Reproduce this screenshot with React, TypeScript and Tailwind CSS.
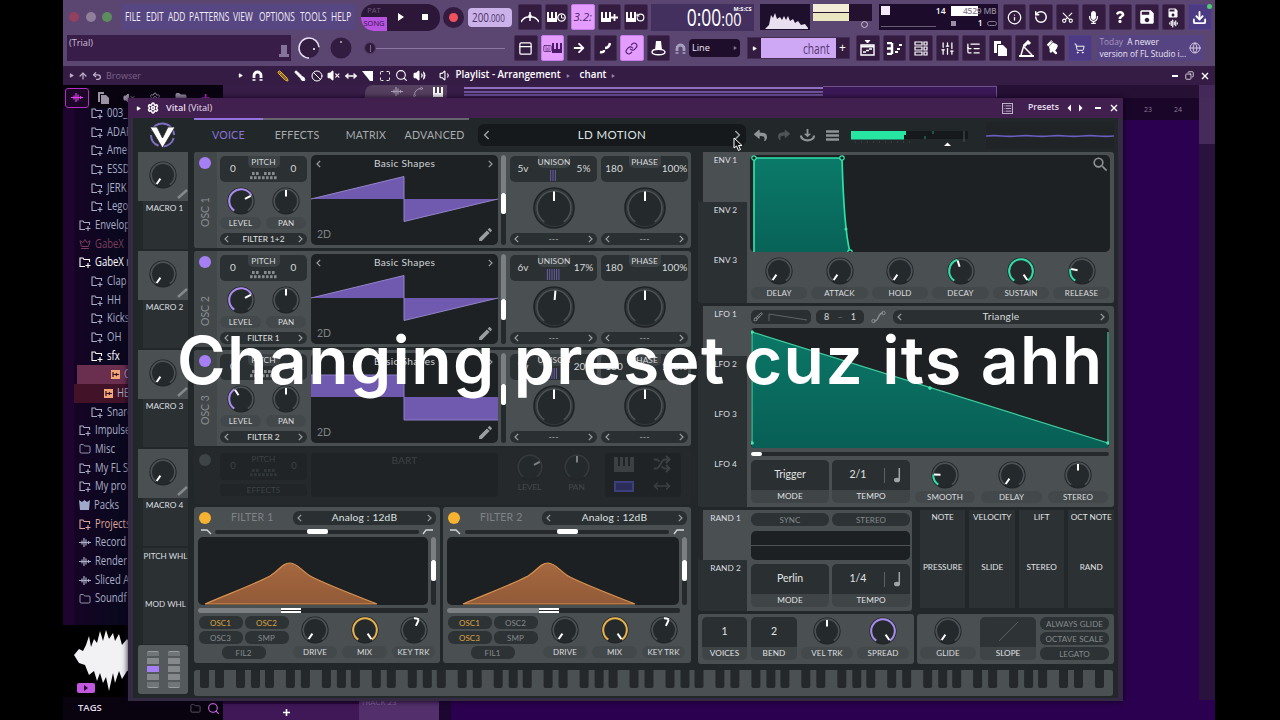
import React from "react";
import {
  Play, Info, RotateCcw, Scissors, Download, ShoppingCart, Link as LinkIcon, Globe,
  Ban, VolumeX, MoveHorizontal, Maximize, Search, Volume2, Volume1, Folder, Crown,
  AudioLines, Settings, List, SlidersVertical, ListTree, Spline, PanelTop, Copy, Keyboard,
  Undo2, ArrowUp, Pencil, Brush, Shuffle,
} from "lucide-react";
import { MdEdit, MdSearch, MdSave } from "react-icons/md";
import { FaReply, FaShare, FaArrowRight, FaQuestion, FaMicrophone, FaHandPointDown } from "react-icons/fa";

/* ---------- shared pieces ---------- */

const rad = (a: number) => ((a - 90) * Math.PI) / 180;
const arc = (c: number, r: number, a: number, b: number) => {
  const x1 = c + r * Math.cos(rad(a)), y1 = c + r * Math.sin(rad(a));
  const x2 = c + r * Math.cos(rad(b)), y2 = c + r * Math.sin(rad(b));
  return `M${x1} ${y1}A${r} ${r} 0 ${b - a > 180 ? 1 : 0} 1 ${x2} ${y2}`;
};

type KnobProps = { angle?: number; color?: string; from?: number; big?: boolean };
function Knob({ angle = -145, color, from = -145, big }: KnobProps) {
  const s = big ? 42 : 28;
  const c = s / 2;
  const r = big ? 17 : 11.8;
  return (
    <svg width={s} height={s} viewBox={`0 0 ${s} ${s}`} className="shrink-0">
      <circle cx={c} cy={c} r={c - 1} fill="#24292b" stroke="#1f2325" strokeWidth={big ? 1.6 : 1.2} />
      {big && <circle cx={c} cy={c} r={18.6} fill="none" stroke="#33383a" strokeWidth="1.2" />}
      <path d={arc(c, r, -145, 145)} fill="none" stroke="#4b5154" strokeWidth="1.7" />
      {color && <path d={arc(c, r, from, angle)} fill="none" stroke={color} strokeWidth="2" />}
      <line
        x1={c} y1={c - (big ? 16.5 : 11)} x2={c} y2={c - (big ? 7 : 4.5)}
        stroke="#fff" strokeWidth="2" transform={`rotate(${angle} ${c} ${c})`}
      />
    </svg>
  );
}

function Label({ children, className = "" }: { children: React.ReactNode; className?: string }) {
  return (
    <div className={`flex h-3 items-center justify-center rounded-md bg-[#43484b] text-[8px] tracking-[0.1px] whitespace-nowrap text-[#dadddf] ${className}`}>
      {children}
    </div>
  );
}

function KnobCell({ label, className = "", ...k }: { label: string; className?: string } & KnobProps) {
  return (
    <div className={`flex flex-col items-center ${className}`}>
      <Knob {...k} />
      <Label className="mt-[2px] w-full">{label}</Label>
    </div>
  );
}

function Chev({ right, className = "" }: { right?: boolean; className?: string }) {
  return (
    <svg width="5" height="8" viewBox="0 0 5 8" className={className}>
      <path d={right ? "M0.8 0.8L4 4L0.8 7.2" : "M4.2 0.8L1 4L4.2 7.2"} fill="none" stroke="#9a9fa2" strokeWidth="1.2" />
    </svg>
  );
}

function Select({ children, className = "" }: { children: React.ReactNode; className?: string }) {
  return (
    <div className={`flex items-center justify-between rounded-md bg-[#2a2f31] px-1 whitespace-nowrap ${className}`}>
      <Chev />
      <span>{children}</span>
      <Chev right />
    </div>
  );
}

/* ---------- oscillators ---------- */

function ValueBox({ title, left, right, children }: { title: string; left: string; right: string; children?: React.ReactNode }) {
  return (
    <div className="grid h-[26px] w-[87px] grid-cols-[26px_35px_26px] rounded-[5px] bg-[#2b3032] text-center text-[10px] text-[#d6dadb]">
      <span className="leading-[25px]">{left}</span>
      <div className="flex flex-col items-center">
        <span className="h-[12px] w-[32px] rounded-b-[5px] bg-[#3c4144] text-[8.300px] leading-[12px] tracking-[0.1px]">{title}</span>
        {children}
      </div>
      <span className="-ml-[1px] leading-[25px]">{right}</span>
    </div>
  );
}

function MiniKeys({ color = "#868b8e" }: { color?: string }) {
  return (
    <svg width="27" height="8" className="mt-[4px]">
      {[2, 6, 14, 18, 22].map((x) => <rect key={x} x={x} y="0" width="2.6" height="3" fill={color} />)}
      {[0, 4, 8, 12, 16, 20, 24].map((x) => <rect key={x} x={x} y="4.2" width="2.6" height="3" fill={color} />)}
    </svg>
  );
}

type OscProps = { n: number; level: number; filter: string; square?: boolean; thumb: number; voices: string; detune: string; unison: number; bars: number };
function Osc({ n, level, filter, square, thumb, voices, detune, unison, bars }: OscProps) {
  return (
    <section className="flex h-[96px] w-[497px] overflow-hidden rounded-[3px] bg-[#4a4f52]">
      <div className="flex w-[23px] flex-col items-center bg-[#42474a] pt-[5px]">
        <span className="mr-[1px] size-3 rounded-full bg-[#a77ff5]" />
        <span className="mt-[16px] flex h-[42px] rotate-180 items-center text-[10.500px] text-[#888d90] [writing-mode:vertical-rl]">OSC {n}</span>
      </div>
      <div className="ml-[3px] w-[87px] pt-1">
        <ValueBox title="PITCH" left="0" right="0"><MiniKeys /></ValueBox>
        <div className="mt-[5px] flex gap-[5px]">
          <KnobCell label="LEVEL" angle={level} color="#a98af0" className="w-[41px]" />
          <KnobCell label="PAN" angle={0} className="w-[40px]" />
        </div>
        <Select className="mt-1 h-3 text-[8.300px] text-[#e0e3e4]">{filter}</Select>
      </div>
      <div className="mt-[3px] ml-1 flex h-[90px] w-[187px] flex-col justify-between rounded-[5px] bg-[#1d2124]">
        <div className="flex h-[17px] items-center justify-between px-[5px] text-[10.200px] tracking-[0.3px] text-[#cfd3d5]">
          <Chev /><span>Basic Shapes</span><Chev right />
        </div>
        <svg width="187" height="48" className="overflow-visible">
          {square ? (
            <g fill="#6f5ab0">
              <path d="M0 2H93V24H0Z" /><path d="M93 24H187V47H93Z" />
              <path d="M0 2H93V47H187" fill="none" stroke="#8f7cc8" />
            </g>
          ) : (
            <g>
              <path d="M0 24L93 1.500V24ZM93 24H187L93 46.500Z" fill="#6f5ab0" />
              <path d="M0 24L93 1.500V46.500L187 24" fill="none" stroke="#9483c8" />
            </g>
          )}
        </svg>
        <div className="flex h-[19px] items-center justify-between pr-1 pb-[2px] pl-[6px] text-[10.5px] text-[#7d8285]">
          <span>2D</span><MdEdit size={17} color="#9a9ea0" />
        </div>
      </div>
      <div className="mt-[3px] ml-[3px] flex h-[90px] w-[5px] flex-col overflow-hidden rounded bg-[#25292b]">
        <span className="bg-[#7b7f82]" style={{ height: thumb }} />
        <span className="h-[21px] rounded-[2px] bg-white" />
      </div>
      <div className="ml-1 flex gap-1 pt-1">
        <div className="flex flex-col items-center">
          <ValueBox title="UNISON" left={voices} right={detune}>
            <svg width="15" height="11" className="mt-[2px]">
              {Array.from({ length: bars }, (_, i) => (
                <rect key={i} x={7.5 - bars * 1.1 + i * 2.3} y="0" width="1" height="11" fill="#6a5fa8" />
              ))}
            </svg>
          </ValueBox>
          <span className="mt-[5px] flex"><Knob big angle={unison} /></span>
          <Select className="mt-[4px] h-3 w-full text-[9px] text-[#a0a4a6]">---</Select>
        </div>
        <div className="flex flex-col items-center">
          <ValueBox title="PHASE" left="180" right="100%" />
          <span className="mt-[5px] flex"><Knob big angle={0} /></span>
          <Select className="mt-[4px] h-3 w-full text-[9px] text-[#a0a4a6]">---</Select>
        </div>
      </div>
    </section>
  );
}

function SampleRow() {
  return (
    <section className="flex h-[57px] w-[497px] items-start rounded bg-[#25292b] pt-[5px] text-[8.300px] text-[#3c4144]">
      <span className="mt-[1px] ml-[5px] size-3 shrink-0 rounded-full bg-[#3f4446]" />
      <div className="ml-[9px] w-[87px] shrink-0">
        <div className="grid h-[27px] grid-cols-[26px_35px_26px] rounded bg-[#202426] text-center text-[9.500px] leading-[26px]">
          <span>0</span>
          <div className="flex flex-col items-center text-[8.300px] leading-[12px]"><span>PITCH</span><MiniKeys color="#303537" /></div>
          <span>0</span>
        </div>
        <div className="mt-1 h-3 rounded bg-[#212527] text-center leading-3">EFFECTS</div>
      </div>
      <div className="ml-1 h-[44px] w-[187px] shrink-0 rounded bg-[#1f2325] text-center text-[10px] tracking-wide">BART</div>
      <div className="ml-[8px] flex w-[94px] shrink-0 justify-around opacity-40">
        {["LEVEL", "PAN"].map((t, i) => (
          <div key={t} className="flex flex-col items-center text-[#70757a]"><Knob angle={i ? 0 : 62} />{t}</div>
        ))}
      </div>
      <div className="ml-[5px] grid h-[44px] w-[76px] grid-cols-2 place-items-center rounded bg-[#1f2325] text-[#3c4043]">
        <svg width="20" height="15"><path d="M0 0H4V9H6V0H9V9H11V0H14V9H16V0H20V15H0Z" fill="currentColor" /></svg><Shuffle size={18} strokeWidth={2.5} />
        <span className="h-[11px] w-5 border-2 border-[#3d3f7c] bg-[#2b2d58]" /><MoveHorizontal size={18} />
      </div>
    </section>
  );
}

/* ---------- filters ---------- */

function Chip({ children, on, className = "" }: { children: React.ReactNode; on?: boolean; className?: string }) {
  return (
    <span className={`flex h-[13px] items-center justify-center rounded-md bg-[#2d3234] text-[8px] tracking-[0.1px] whitespace-nowrap ${on ? "text-[#d9a53f]" : "text-[#868b8e]"} ${className}`}>
      {children}
    </span>
  );
}

function Filter({ n, wide, on, link }: { n: number; wide?: boolean; on: string[]; link: string }) {
  const w = wide ? 233 : 230;
  const dx = wide ? 9 : 0;
  return (
    <section className={`flex h-[156px] flex-col rounded-[3px] bg-[#4a4f52] px-1 ${wide ? "w-[248px]" : "w-[246px]"}`}>
      <div className="flex h-[21px] items-center">
        <span className="ml-[1px] size-3 rounded-full bg-[#f7b231]" />
        <span className="ml-[20px] text-[10.500px] tracking-[0.2px] text-[#7e8386]">FILTER {n}</span>
        <Select className={`ml-auto h-[14px] text-[10.200px] tracking-[0.2px] text-[#dfe2e3] ${wide ? "w-[145px]" : "w-[143px]"}`}>Analog : 12dB</Select>
      </div>
      <div className="flex h-[7px] items-center justify-between px-[3px]">
        <svg width="11" height="7"><path d="M0 2H6L10 6" fill="none" stroke="#d5d8d9" strokeWidth="1.300" /></svg>
        <div className="flex h-1 w-[204px] items-center justify-center rounded bg-[#26292c]">
          <span className="h-[5px] w-[21px] rounded-[2px] bg-white" />
        </div>
        <svg width="11" height="7"><path d="M1 6L4 2H11" fill="none" stroke="#d5d8d9" strokeWidth="1.300" /></svg>
      </div>
      <div className="mt-[2px] flex gap-[3px]">
        <svg width={w} height="68" className="rounded-[5px] bg-[#1c2023]">
          <defs>
            <linearGradient id={`f${n}`} x1="0" y1="0" x2="0" y2="1">
              <stop offset="0" stopColor="#a5683f" /><stop offset="1" stopColor="#925a38" />
            </linearGradient>
          </defs>
          <path transform={`translate(${dx} 0)`} d="M7 67C30 57 55 48 72 39C82 33 84 26 92 26C100 26 104 35 114 40C130 48 156 58 179 67Z" fill={`url(#f${n})`} stroke="#d9924f" strokeWidth="1.200" />
        </svg>
        <div className="flex h-[68px] w-[5px] flex-col overflow-hidden rounded bg-[#25292b]">
          <span className="h-[23px] bg-[#7b7f82]" /><span className="h-[21px] rounded-[2px] bg-white" />
        </div>
      </div>
      <div className="mt-[3px] flex h-[5px] overflow-hidden rounded-[2px] bg-[#25292b]" style={{ width: w }}>
        <span className="bg-[#7b7f82]" style={{ width: 83 + dx }} />
        <span className="w-[20px] border-y-2 border-white bg-[#25292b]" />
      </div>
      <div className="mt-[3px] flex">
        <div className="flex w-[91px] flex-wrap justify-center gap-x-[2px] gap-y-[2px]">
          {["OSC1", "OSC2", "OSC3", "SMP"].map((t) => <Chip key={t} on={on.includes(t)} className="w-[44px]">{t}</Chip>)}
          <Chip className="w-[44px]">{link}</Chip>
        </div>
        <div className={`flex gap-[5px] ${wide ? "ml-[5px]" : "ml-[4px]"}`}>
          <KnobCell label="DRIVE" className="w-[44px]" />
          <KnobCell label="MIX" angle={145} color="#e9b04a" className="w-[45px]" />
          <KnobCell label="KEY TRK" angle={25} from={0} color="#ffffff" className="w-[43px]" />
        </div>
      </div>
    </section>
  );
}

/* ---------- modulators ---------- */

function ModTabs({ names }: { names: string[] }) {
  return (
    <div className="flex w-[49px] flex-col">
      {names.map((t, i) => (
        <div key={t} className={`flex h-[50px] justify-center pt-[1.500px] text-[8.300px] whitespace-nowrap text-[#dcdfe0] ${i === 0 ? "rounded-l-[3px] border-l-[5px] border-[#24282b] bg-[#4a4f52] pl-[1px]" : "bg-[#2b3033] pl-[6px]"}`}>
          {t}
        </div>
      ))}
    </div>
  );
}

function QuarterNote() {
  return (
    <svg width="8" height="15" className="ml-[9px]">
      <ellipse cx="3" cy="12" rx="3" ry="2.300" fill="#a0a4a6" /><path d="M5.300 0V12" stroke="#a0a4a6" strokeWidth="1.500" />
    </svg>
  );
}

function Field({ value, label, note, className = "" }: { value: string; label: string; note?: boolean; className?: string }) {
  return (
    <div className={`flex flex-col overflow-hidden rounded-[5px] bg-[#3f4447] text-center text-[#e0e3e4] ${className}`}>
      <div className={`flex h-[30px] items-center justify-center bg-[#2a2f31] text-[10.500px] ${note ? "pl-[4px]" : ""}`}>
        <span className={note ? "w-[28px]" : ""}>{value}</span>
        {note && <><span className="ml-[12px] h-[15px] w-px bg-[#5b6063]" /><QuarterNote /></>}
      </div>
      <span className="flex-1 text-[8.200px] leading-[12px] tracking-[0.1px]">{label}</span>
    </div>
  );
}

function Envelope() {
  return (
    <section className="flex h-[151px] rounded bg-[#2b3033]">
      <ModTabs names={["ENV 1", "ENV 2", "ENV 3"]} />
      <div className="flex-1 rounded-r-[3px] bg-[#4a4f52] pt-[3px] pl-[3px]">
        <div className="flex h-[97px] w-[360px] justify-between rounded-[5px] bg-[#1d2124]">
          <svg width="120" height="97">
            <defs><linearGradient id="env" x1="0" y1="0" x2="0" y2="1"><stop offset="0" stopColor="#0b7a69" /><stop offset="1" stopColor="#076357" /></linearGradient></defs>
            <path d="M4 3H92Q94 75 100 97H4Z" fill="url(#env)" />
            <path d="M4 97V3H92Q94 75 100 97" fill="none" stroke="#2fdfa6" strokeWidth="1.700" />
            {[[4, 3], [92, 3], [100, 97]].map(([x, y]) => <circle key={x} cx={x} cy={y} r="2.200" fill="#15201f" stroke="#3deab0" strokeWidth="1.200" />)}
            <circle cx="96" cy="74" r="1.500" fill="#3deab0" />
          </svg>
          <MdSearch size={19} color="#8b9092" />
        </div>
        <div className="mt-[5px] flex gap-[4px] pl-[1px]">
          <KnobCell label="DELAY" className="w-[56px]" />
          <KnobCell label="ATTACK" className="w-[57px]" />
          <KnobCell label="HOLD" className="w-[56px]" />
          <KnobCell label="DECAY" angle={-18} color="#2fdfa6" className="w-[57px]" />
          <KnobCell label="SUSTAIN" angle={145} color="#2fdfa6" className="w-[56px]" />
          <KnobCell label="RELEASE" angle={-80} color="#2fdfa6" className="w-[57px]" />
        </div>
      </div>
    </section>
  );
}

function Lfo() {
  return (
    <section className="mt-[3px] flex h-[201px] rounded bg-[#2b3033]">
      <ModTabs names={["LFO 1", "LFO 2", "LFO 3", "LFO 4"]} />
      <div className="flex-1 rounded-r-[3px] bg-[#4a4f52] pt-[4px] pl-[4px]">
        <div className="flex h-[14px] items-center">
          <div className="flex h-[14px] w-[60px] items-center rounded-[5px] bg-[#2a2f31] pl-[2px]">
            <Brush size={10} color="#9a9ea0" />
            <svg width="42" height="10" className="ml-1"><path d="M2 9V2L40 8" fill="none" stroke="#5f6467" /></svg>
          </div>
          <div className="ml-[5px] flex h-[14px] w-[48px] items-center justify-between rounded-[5px] bg-[#2a2f31] px-[8px] text-[9px] text-[#d8dbdc]"><span>8</span><span className="text-[#666b6e]">–</span><span>1</span></div>
          <svg width="15" height="14" className="ml-[7px]"><path d="M3 11C9 11 6 3 12 3" fill="none" stroke="#8b9092" strokeWidth="1.400" /><circle cx="2.500" cy="11" r="1.700" fill="none" stroke="#8b9092" /><circle cx="12.500" cy="3" r="1.700" fill="none" stroke="#8b9092" /></svg>
          <Select className="ml-[7px] h-[14px] w-[216px] text-[10.200px] tracking-[0.25px] text-[#d8dbdc]">Triangle</Select>
        </div>
        <svg width="358" height="120" className="mt-[4px] rounded-[4px] bg-[#1d2124]">
          <defs><linearGradient id="lfo" x1="0" y1="0" x2="0" y2="1"><stop offset="0" stopColor="#0b7766" /><stop offset="1" stopColor="#085f55" /></linearGradient></defs>
          <path d="M1 4L357 115V120H1Z" fill="url(#lfo)" />
          <path d="M1 115V4L357 115V4" fill="none" stroke="#3fcf9f" strokeWidth="1.200" />
          {[[1, 4], [179, 60], [357, 115], [1, 115]].map(([x, y]) => <circle key={`${x}-${y}`} cx={x} cy={y} r="1.800" fill="#3deab0" />)}
        </svg>
        <div className="mt-[4px] h-1 w-[358px] rounded bg-[#26292c]"><div className="h-full w-[11px] rounded-[2px] bg-white" /></div>
        <div className="mt-[4px] flex">
          <Field value="Trigger" label="MODE" className="h-[43px] w-[78px]" />
          <Field value="2/1" label="TEMPO" note className="ml-[3px] h-[43px] w-[78px]" />
          <div className="mt-[1px] ml-[5px] flex gap-[6px]">
            <KnobCell label="SMOOTH" angle={-88} color="#2fdfa6" className="w-[60px]" />
            <KnobCell label="DELAY" className="w-[61px]" />
            <KnobCell label="STEREO" angle={0} className="w-[60px]" />
          </div>
        </div>
      </div>
    </section>
  );
}

function ModSources() {
  const cols = [["NOTE", "PRESSURE"], ["VELOCITY", "SLIDE"], ["LIFT", "STEREO"], ["OCT NOTE", "RAND"]];
  return (
    <div className="ml-[8px] grid h-[98px] w-[196px] grid-cols-4 gap-[4px]">
      {cols.map(([a, b]) => (
        <div key={a} className="flex flex-col items-center bg-[#2c3134] text-[8.200px] whitespace-nowrap text-[#e0e3e4]">
          <span className="flex h-[50px] pt-[1px]">{a}</span><span className="pt-[1px]">{b}</span>
        </div>
      ))}
    </div>
  );
}

function Random() {
  return (
    <div className="mt-[3px] flex h-[101px]">
      <section className="flex w-[216px] rounded bg-[#2b3033]">
        <ModTabs names={["RAND 1", "RAND 2"]} />
        <div className="flex-1 rounded-r-[3px] bg-[#4a4f52] pt-[3px] pl-[4px]">
          <div className="flex gap-[3px]"><Chip className="w-[78px]">SYNC</Chip><Chip className="w-[78px]">STEREO</Chip></div>
          <div className="mt-[5px] flex h-[29px] w-[159px] items-center rounded-[5px] bg-[#1c2022]"><span className="h-px w-full bg-[#4c5154]" /></div>
          <div className="mt-[4px] flex gap-[3px]">
            <Field value="Perlin" label="MODE" className="h-[43px] w-[78px]" />
            <Field value="1/4" label="TEMPO" note className="h-[43px] w-[78px]" />
          </div>
        </div>
      </section>
      <ModSources />
    </div>
  );
}

function VoiceControls() {
  return (
    <div className="mt-[3px] flex h-[50px] gap-[3px]">
      <section className="flex w-[216px] rounded-[3px] bg-[#4a4f52] pt-[3px] pl-1">
        <Field value="1" label="VOICES" className="h-[43px] w-[45px]" />
        <Field value="2" label="BEND" className="ml-1 h-[43px] w-[46px]" />
        <KnobCell label="VEL TRK" angle={0} className="ml-[4px] w-[52px]" />
        <KnobCell label="SPREAD" angle={145} color="#a98af0" className="ml-[4px] w-[52px]" />
      </section>
      <section className="flex w-[197px] rounded-[3px] bg-[#4a4f52] pt-[3px] pl-[3px]">
        <KnobCell label="GLIDE" className="w-[56px]" />
        <div className="ml-[4px] flex h-[43px] w-[56px] flex-col items-center rounded-[5px] bg-[#2e3335]">
          <svg width="56" height="30"><path d="M19 24L38 5" stroke="#5a5f62" /></svg>
          <span className="w-full flex-1 rounded-b-[5px] bg-[#3f4447] text-center text-[8.200px] leading-[12px] text-[#e0e3e4]">SLOPE</span>
        </div>
        <div className="ml-1 flex w-[69px] flex-col gap-[2px]"><Chip>ALWAYS GLIDE</Chip><Chip>OCTAVE SCALE</Chip><Chip>LEGATO</Chip></div>
      </section>
    </div>
  );
}

/* ---------- Vital frame ---------- */

function MacroColumn() {
  return (
    <div className="flex w-[50px] flex-col">
      {[1, 2, 3, 4].map((n) => (
        <div key={n} className="h-[99px]">
          <div className="flex h-[49px] flex-col items-center bg-[#4a4f52] pt-[9px]">
            <Knob />
            <svg width="11" height="10" className="ml-auto"><path d="M1 9L10 1" stroke="#85898b" strokeWidth="2.500" /></svg>
          </div>
          <div className="ml-[5px] flex h-[48px] justify-center bg-[#2b3033] pr-[2px] text-[8.300px] whitespace-nowrap text-[#dcdfe0]"><span className="pt-[0.500px]">MACRO {n}</span></div>
        </div>
      ))}
      {["PITCH WHL", "MOD WHL"].map((t) => (
        <div key={t} className="ml-[5px] flex h-[48px] justify-center bg-[#2b3033] pt-[2px] text-[8.100px] whitespace-nowrap text-[#dcdfe0]">{t}</div>
      ))}
      <div className="mt-px flex h-[49px] justify-center gap-[9px] rounded-[3px] bg-[#54595b] pt-[6px]">
        {[0, 1].map((c) => (
          <div key={c} className="flex w-3 flex-col gap-[2px]">
            <span className="h-[5px] rounded-t-[2px] border-t border-[#9a9ea0] bg-[#707578]" /><span className="h-[6px] bg-[#85898c]" />
            <span className={`h-[6px] ${c ? "bg-[#85898c]" : "bg-[#a77ff5]"}`} />
            <span className="h-[6px] bg-[#85898c]" /><span className="h-[6px] rounded-b-[2px] border-b border-[#9a9ea0] bg-[#707578]" />
          </div>
        ))}
      </div>
    </div>
  );
}

function Keybed() {
  const keys: number[] = [];
  for (let o = 0; o < 11; o++) [6, 21, 42, 57, 71].forEach((k) => { if (o < 10 || k < 50) keys.push(o * 85.9 + k); });
  return (
    <svg width="919" height="26" className="mt-[6px] rounded-[3px] bg-[#4b5052]">
      {keys.map((x) => <path key={x} d={`M${x} 0h9v16q0 2 -2 2h-5q-2 0 -2 -2z`} fill="#24282b" />)}
    </svg>
  );
}

function VitalHeader() {
  return (
    <header className="flex h-[34px]">
      <div className="flex w-[56px] items-center">
        <svg width="28" height="28" viewBox="0 0 28 28" className="ml-[10px]">
          <circle cx="14.500" cy="14" r="11.500" fill="none" stroke="#7f6fc4" strokeWidth="2" strokeDasharray="0 3 14 4 0 1 14 1 0 3 32" />
          <path d="M2 6H9L14.500 17L20 6H27L14.500 27Z" fill="#fff" stroke="#22272a" strokeWidth="0.800" />
        </svg>
      </div>
      <nav className="grid w-[275px] grid-cols-4">
        {["VOICE", "EFFECTS", "MATRIX", "ADVANCED"].map((t, i) => (
          <div key={t} className={`flex items-center justify-center border-t-2 text-[10.600px] tracking-[0.25px] ${i === 0 ? "border-[#9273e0] text-[#8f72d8]" : "border-[#66646f] text-[#a9adaf]"}`}>{t}</div>
        ))}
      </nav>
      <div className="mt-[6px] ml-[9px] flex h-[22px] w-[268px] items-center justify-between rounded-md bg-[#15191b] px-[6px] text-[11.500px] tracking-[0.35px] text-[#dfe2e3]">
        <Chev className="scale-125" /><span>LD MOTION</span><Chev right className="scale-125" />
      </div>
      <div className="ml-[8px] flex w-[85px] items-center justify-between">
        <FaReply size={13} color="#8e9395" /><FaShare size={12} color="#4f5457" />
        <svg width="15" height="13" viewBox="0 0 16 14"><path d="M7 0H9V5H12L8 9L4 5H7Z" fill="#8e9395" /><path d="M1 7C1 14 15 14 15 7" fill="none" stroke="#8e9395" strokeWidth="2.400" /></svg>
        <svg width="13" height="11"><path d="M0 1.500H13M0 5.500H13M0 9.500H13" stroke="#8e9395" strokeWidth="2.400" /></svg>
      </div>
      <svg width="120" height="34" className="ml-[12px]">
        <rect x="0" y="13" width="117" height="8" fill="#15191b" />
        <rect x="0" y="13" width="55" height="4" fill="#27e6a3" /><rect x="0" y="17" width="53" height="4.500" fill="#27e6a3" />
        <path d="M82 13V16M74 18V21" stroke="#2f8f78" /><path d="M113 13V24" stroke="#4c5658" />
        <path d="M4 24H60" stroke="#4c5154" strokeDasharray="1 5" />
        <path d="M93 28L96.500 24.500L100 28Z" fill="#fff" />
      </svg>
      <div className="mt-[4px] ml-[15px] flex h-[27px] w-[128px] items-center bg-[#202427]">
        <svg width="128" height="6"><path d="M0 3Q8 2.300 16 3T32 3T48 3T64 3T80 3T96 3T112 3T128 3" fill="none" stroke="#6a5dbe" strokeWidth="1.700" /></svg>
      </div>
    </header>
  );
}

function VitalWindow() {
  return (
    <div className="absolute top-[98px] left-[128px] h-[603px] w-[995px] bg-[#342a42] font-['Lato',sans-serif] shadow-[0_0_6px_#12001e]">
      <div className="flex h-5 items-center bg-[#41204f] pr-[5px] pl-[8px] font-['Open_Sans',sans-serif] text-[9.2px] text-[#e8dff0]">
        <Play size={5} fill="#fff" color="#fff" />
        <Settings size={12} strokeWidth={3} color="#fff" className="ml-[6px]" />
        <span className="ml-[7px]"><b className="font-semibold">Vital</b> (Vital)</span>
        <List size={11} className="ml-auto border border-[#bfb0cc]" />
        <span className="ml-[15px] text-[8.700px] font-semibold">Presets</span>
        <svg width="16" height="8" className="ml-[8px]"><path d="M4 0.500L0.500 4L4 7.500ZM12 0.500L15.500 4L12 7.500Z" fill="#fff" /></svg>
        <span className="ml-[12px] h-[2px] w-[6px] bg-white" />
        <svg width="8" height="8" className="ml-[9px]"><path d="M1 1L7 7M7 1L1 7" stroke="#fff" strokeWidth="1.400" /></svg>
      </div>
      <div className="mr-[5px] ml-[5px] h-[580px] bg-[#22272a] pl-[5px]">
        <VitalHeader />
        <div className="flex">
          <MacroColumn />
          <div className="ml-[6px]">
            <div className="flex gap-[7px]">
              <div className="flex flex-col gap-[3px]">
                <Osc n={1} level={62} filter="FILTER 1+2" thumb={38} voices="5v" detune="5%" unison={0} bars={3} />
                <Osc n={2} level={62} filter="FILTER 1" thumb={45} voices="6v" detune="17%" unison={5} bars={6} />
                <Osc n={3} level={-33} filter="FILTER 2" square thumb={31} voices="7v" detune="20%" unison={0} bars={4} />
                <div className="-mt-[1px]"><SampleRow /></div>
                <div className="-mt-[1px] flex gap-[3px]">
                  <Filter n={1} on={["OSC1", "OSC2"]} link="FIL2" />
                  <Filter n={2} wide on={["OSC1", "OSC3"]} link="FIL1" />
                </div>
              </div>
              <div className="w-[416px]"><Envelope /><Lfo /><Random /><VoiceControls /></div>
            </div>
            <Keybed />
          </div>
        </div>
      </div>
    </div>
  );
}

/* ---------- FL Studio shell ---------- */

function Tool({ children, on, blue, className = "" }: { children: React.ReactNode; on?: boolean; blue?: boolean; className?: string }) {
  return (
    <span className={`flex h-[26px] w-[23.500px] shrink-0 items-center justify-center rounded-[2px] border ${on ? "border-[#c57be8] bg-[#e59cff] text-[#4b1c66]" : blue ? "border-[#52408a] bg-[#4c3b82] text-white" : "border-[#452c55] bg-[#331c40] text-white"} ${className}`}>
      {children}
    </span>
  );
}

function PianoGlyph() {
  return <svg width="10" height="10" className="shrink-0"><path d="M0 0H2V6H4V0H6V6H8V0H10V10H0Z" fill="currentColor" /></svg>;
}

function Horseshoe({ color = "#fff", className = "" }: { color?: string; className?: string }) {
  return <svg width="11" height="11" className={`shrink-0 ${className}`}><path d="M2 8V5.500A3.500 3.500 0 0 1 9 5.500V8" fill="none" stroke={color} strokeWidth="2.800" /><path d="M0.500 10H3.500M7.500 10H10.500" stroke={color} strokeWidth="1.500" /></svg>;
}

function MenuBar() {
  const items: [string, string][] = [["FILE", "w-[21px]"], ["EDIT", "w-[22px]"], ["ADD", "w-[21px]"], ["PATTERNS", "w-[44px]"], ["VIEW", "w-[26px]"], ["OPTIONS", "w-[41px]"], ["TOOLS", "w-[31px]"], ["HELP", "w-[22px]"]];
  return (
    <div className="ml-[10px] flex h-[26px] w-[233px] items-center bg-[#564682] pl-[3px] text-[12.500px] text-[#f3edf8]">
      {items.map(([t, w]) => <span key={t} className={`${w} whitespace-nowrap`}><span className="inline-block origin-left scale-x-[0.67]">{t}</span></span>)}
    </div>
  );
}

function TopRow() {
  return (
    <div className="flex h-[34px] items-center">
      <div className="flex w-[49px] justify-between pl-[6px]">
        <span className="size-[10px] rounded-full bg-[#93405f]" /><span className="size-[10px] rounded-full bg-[#8f7e9c]" /><span className="size-[10px] rounded-full bg-[#5d8d5f]" />
      </div>
      <MenuBar />
      <div className="ml-[6px] flex h-[27px] w-[79px] items-center overflow-hidden rounded-[13px] bg-[#2c1739]">
        <div className="flex h-full w-[26px] flex-col text-center text-[7.500px] leading-[13px]">
          <span className="text-[#6d5a7a]">PAT</span><span className="h-[14px] bg-[#b653df] text-[#32104a]">SONG</span>
        </div>
        <svg width="6" height="8" className="ml-[11px]"><path d="M0 0L6 4L0 8Z" fill="#fff" /></svg>
        <span className="ml-[18px] size-[6px] bg-white" />
      </div>
      <span className="ml-[3px] flex size-[21px] items-center justify-center rounded-full bg-[#331c40]"><span className="size-[9px] rounded-full bg-[#f0525c]" /></span>
      <div className="ml-[4px] flex h-[19px] w-[44px] items-center rounded bg-[#cbb3ea] pl-[4px] text-[#4b3168]">
        <span className="inline-block origin-left scale-x-[0.73] text-[13.500px]">200<span className="text-[11px]">.000</span></span>
      </div>
      <div className="ml-[6px] flex gap-[3px]">
        <Tool><svg width="18" height="12"><path d="M0 11Q3 6 7 6H11Q15 6 18 11M9 1V10" fill="none" stroke="#fff" strokeWidth="1.500" /><circle cx="9" cy="5" r="1.800" fill="#fff" /></svg></Tool>
        <Tool><PianoGlyph /><svg width="9" height="9"><circle cx="4.500" cy="4.500" r="3.700" fill="none" stroke="#fff" strokeWidth="1.300" /><path d="M4.500 2V5H7" fill="none" stroke="#fff" /></svg></Tool>
        <Tool on><span className="text-[11.500px] italic">3.2:</span></Tool>
        <Tool><PianoGlyph /><svg width="7" height="7"><path d="M3.500 0V7M0 3.500H7" stroke="#fff" strokeWidth="1.800" /></svg></Tool>
        <Tool><PianoGlyph /><RotateCcw size={9} strokeWidth={3} /></Tool>
      </div>
      <div className="ml-[3px] flex h-[27px] w-[103px] items-center justify-end bg-[#43305f] pr-[10px] text-white">
        <span className="-mr-[7px] inline-block origin-right scale-x-[0.76] pr-[18px] text-[23px] leading-none whitespace-nowrap">0:00<span className="text-[19px]">:00</span></span>
        <span className="mt-[2px] -mr-[8px] -ml-[15px] self-start text-[5.500px] leading-[7px] font-bold">M:S:CS</span>
      </div>
      <svg width="50" height="26" className="ml-[6px] bg-[#1e0f2c]">
        <path d="M5 25L9 21L11 11L13 14L15 9L17 15L20 13L22 16L24 12L26 16L28 12L30 17L33 15L35 19L38 17L41 21L45 20L48 24V25Z" fill="#e8dff0" />
      </svg>
      <div className="ml-[3px] flex h-[26px] w-[59px] flex-col">
        <div className="flex h-[17px] bg-[#24112f]"><div className="flex w-[36px] flex-col gap-[1px]"><span className="flex-1 bg-[#f3edd8]" /><span className="flex-1 bg-[#e9e6c0]" /></div></div>
        <span className="mr-1 ml-auto size-[7px] rounded-full border border-[#c9bbd4]" />
      </div>
      <div className="ml-[7px] flex h-[26px] w-[119px] items-start justify-between bg-[#1c0b2a] p-[2px] pr-[1px] text-[8.500px] font-semibold text-white">
        <div className="flex w-[55px] flex-col gap-[11px]"><span className="size-[9px] bg-[#f6eafa]" /><span className="h-px bg-[#6b5c78]" /></div>
        <span className="ml-auto leading-[9px]">14</span>
        <div className="ml-[5px] flex w-[46px] flex-col leading-[10px]">
          <span className="w-full bg-[linear-gradient(90deg,#fff_58%,#1c0b2a_58%)] text-right tracking-tight text-[#8c8396]">4529 MB</span>
          <span className="mt-[2px] flex items-center justify-end gap-[4px]"><span className="mr-auto size-[5px] bg-[#9b8fa6]" />1<span className="h-[5px] w-[10px] rounded-full border border-[#857a90]" /></span>
        </div>
      </div>
      <div className="ml-[5px] flex gap-[3px]">
        <Tool><Info size={15} /></Tool><Tool><RotateCcw size={14} strokeWidth={2.5} /></Tool><Tool><Scissors size={13} className="-rotate-90" /></Tool><Tool><FaMicrophone size={13} /></Tool>
        <Tool><FaQuestion size={12} /></Tool><Tool><MdSave size={18} /></Tool>
        <Tool className="flex-col"><MdSave size={12} /><AudioLines size={9} strokeWidth={3} /></Tool><Tool blue><Download size={15} strokeWidth={3} /></Tool>
      </div>
      <span className="-mt-[22px] -ml-[5px] size-[5px] shrink-0 rounded-full bg-[#4fcf70]" />
    </div>
  );
}

function SecondRow() {
  return (
    <div className="flex h-[28px] items-center pl-[4px]">
      <div className="flex h-[26px] w-[224px] justify-between bg-[#381d49] p-[2px] text-[9.200px] leading-[12px] text-[#cdbfd8]"><span>(Trial)</span><svg width="10" height="13" className="mt-[8px]"><path d="M2 0H8V9H10V12H0V9H2Z" fill="#86739a" /></svg></div>
      <svg width="25" height="25" className="ml-[6px]"><circle cx="12" cy="12" r="10" fill="#321c40" stroke="#e9dff2" strokeWidth="1.500" strokeDasharray="46 17" transform="rotate(90 12 12)" /><circle cx="17" cy="13" r="1" fill="#fff" /></svg>
      <svg width="25" height="25" className="ml-[6px]"><circle cx="13" cy="12" r="10.500" fill="#321c40" /><circle cx="13" cy="6" r="1" fill="#bbb" /></svg>
      <span className="ml-[11px] flex size-[12px] items-center justify-center rounded-full border border-[#543d66] bg-[#301a3e]"><span className="h-[7px] w-px bg-[#7d6b8c]" /></span>
      <span className="h-px w-[129px] bg-[#8a76a0]" />
      <div className="ml-[9px] flex gap-[3px]">
        <Tool><PanelTop size={15} /></Tool><Tool on><Keyboard size={9} /><PianoGlyph /></Tool><Tool><FaArrowRight size={12} /></Tool>
        <Tool><svg width="12" height="12"><path d="M1 10Q5 11 5 8M6 6Q10 6 11 1" fill="none" stroke="#fff" strokeWidth="2.500" /></svg></Tool>
        <Tool on><LinkIcon size={13} /></Tool>
        <Tool><svg width="15" height="16"><path d="M5 1H10L11 10H4Z" fill="#fff" /><ellipse cx="7.500" cy="12" rx="6.500" ry="2.700" fill="none" stroke="#fff" strokeWidth="1.400" /></svg></Tool>
      </div>
      <Horseshoe color="#a5a0c0" className="ml-[5px]" />
      <div className="ml-[3px] flex h-[18px] w-[51px] items-center justify-between rounded bg-[#1e0d2b] px-[3px] text-[9.200px] text-[#f0e8f5]">Line<Play size={4} fill="#8a7898" color="#8a7898" /></div>
      <div className="ml-[7px] flex h-[22px] w-[103px] items-center border border-[#452c55] bg-[#331c40]">
        <Play size={5} fill="#fff" color="#fff" className="mx-[4px]" />
        <span className="flex h-[20px] flex-1 items-center justify-end bg-[#cfa8f5] pr-[6px] text-[14px] text-[#543670]"><span className="inline-block origin-right scale-x-[0.73]">chant</span></span>
        <span className="w-[13px] text-center text-[12px] text-white">+</span>
      </div>
      <div className="ml-[6px] flex gap-[3px]">
        <Tool><svg width="15" height="16" fill="none" stroke="#fff"><path d="M5 0H10L7.500 3Z" fill="#fff" /><path d="M1 5H14V15H1Z" strokeWidth="1.400" /><path d="M1 6.500H14" strokeWidth="2" /><path d="M3 12H6M6 10.500H9M9 9H12" strokeWidth="1.600" /></svg></Tool>
        <Tool><svg width="17" height="13"><path d="M1 1H6M1 6.500H6M1 12H6M6 1V12" fill="none" stroke="#fff" strokeWidth="2.500" /><path d="M9 10H12M11 7H14M13 3H16" stroke="#fff" strokeWidth="2" /></svg></Tool>
        <Tool><svg width="14" height="15" fill="none" stroke="#fff" strokeWidth="1.200"><path d="M1 1H8V4H1ZM1 6H8V9H1ZM1 11H8V14H1ZM10 1H13V4H10ZM10 6H13V9H10ZM10 11H13V14H10Z" /></svg></Tool>
        <Tool><SlidersVertical size={15} /></Tool><Tool><ListTree size={15} /></Tool>
        <Tool><svg width="13" height="15"><path d="M0 0H7V3H3V12H0Z" fill="#fff" /><path d="M4 4H9L13 8V15H4Z" fill="#fff" /></svg></Tool>
        <Tool><svg width="15" height="17" fill="none" stroke="#fff"><path d="M5 6L9 2L11 4" strokeWidth="3" /><path d="M5 5L2 15M5 7L13 15" strokeWidth="1.500" /><path d="M0 16H15" strokeWidth="2" /></svg></Tool>
        <Tool><FaHandPointDown size={14} className="-rotate-45" /></Tool><Tool blue><ShoppingCart size={11} /></Tool>
      </div>
      <div className="ml-[5px] flex h-[26px] w-[107px] items-center justify-between bg-[#554382] px-[3px] text-[8.300px] leading-[12px] text-[#ece4f4]">
        <span className="whitespace-nowrap"><span className="text-[#a999bd]">Today</span>&nbsp; A newer<br />version of FL Studio i...</span>
        <Globe size={12} color="#d4c6e0" />
      </div>
    </div>
  );
}

function PlaylistBar() {
  return (
    <div className="flex h-[19px] items-center bg-[#351c45] text-[9.800px] text-white">
      <div className="flex w-[170px] items-center gap-[4px] pl-[6px] text-[#c2b2cc]">
        <Play size={5} fill="currentColor" /><ArrowUp size={10} strokeWidth={3} /><Undo2 size={10} strokeWidth={3} /><span className="text-[9px] text-[#7b6488]">Browser</span>
      </div>
      <div className="flex items-center gap-[4.700px] pl-[5px]">
        <Play size={5} fill="#fff" className="mr-[4px]" /><Horseshoe className="mr-[10px]" />
        <Pencil size={12} color="#e8b63c" fill="#8a6420" className="-scale-x-100" /><Brush size={12} fill="#fff" className="-scale-x-100" /><Ban size={12} /><VolumeX size={13} fill="#fff" /><MoveHorizontal size={12} strokeWidth={3} />
        <svg width="12" height="12"><path d="M0 1H11V11H8Z" fill="#fff" /></svg><Maximize size={12} /><Search size={13} /><Volume2 size={13} fill="#fff" />
        <Volume1 size={13} className="ml-[8px]" />
      </div>
      <span className="ml-[4px] font-semibold whitespace-nowrap">Playlist - Arrangement</span>
      <Play size={4} fill="#9c86ac" color="#9c86ac" className="mx-[5px]" /><span className="ml-[5px] font-semibold">chant</span>
      <Play size={4} fill="#9c86ac" color="#9c86ac" className="ml-[5px]" />
      <div className="mr-[6px] ml-auto flex items-center gap-[7px]"><span className="h-[2px] w-[6px] bg-white" /><Copy size={9} className="-scale-x-100" /><svg width="8" height="8"><path d="M1 1L7 7M7 1L1 7" stroke="#fff" strokeWidth="1.400" /></svg></div>
    </div>
  );
}

type Row = [string, "a" | "b" | "c" | "d", string];
const files: Row[] = [
  ["003_", "b", "f"], ["ADAPT", "b", "f"], ["Amen", "b", "f"], ["ESSD", "b", "f"], ["JERK", "b", "f"], ["Legow", "b", "f"],
  ["Envelop", "a", "f"], ["GabeX", "a", "crown"], ["GabeX m", "a", "sel"], ["Clap", "b", "f"], ["HH", "b", "f"], ["Kicks", "b", "f"], ["OH", "b", "f"], ["sfx", "b", "sel"],
  ["C", "d", "wav"], ["HE", "c", "wav"], ["Snare", "b", "f"], ["Impulse", "a", "f"], ["Misc", "a", "p"], ["My FL S", "a", "f"], ["My pro", "a", "f"],
  ["Packs", "a", "pack"], ["Projects", "a", "proj"], ["Record", "a", "w"], ["Render", "a", "w"], ["Sliced A", "a", "w"], ["Soundf", "a", "p"],
];
const indent = { a: "pl-[16px]", b: "pl-[28px]", c: "pl-[40px]", d: "pl-[34px]" };

function Wave() {
  return <svg width="12" height="11" className="shrink-0"><path d="M0 5.500H12M3 3.500V7.500M5 1V10M7 2.500V8.500M9.500 4V7" stroke="currentColor" strokeWidth="1.200" /></svg>;
}

function RowIcon({ kind }: { kind: string }) {
  if (kind === "crown") return <Crown size={12} />;
  if (kind === "wav") return <svg width="9" height="9" className="shrink-0"><rect width="9" height="9" fill="#f0a878" /><path d="M2 2V7M2 4.500H8M5 3L6 4.500L5 6" fill="none" stroke="#3a1020" strokeWidth="1.200" /></svg>;
  if (kind === "p") return <Folder size={12} strokeWidth={1.7} />;
  if (kind === "pack") return <svg width="11" height="10"><path d="M0 0L3 2L5.500 0L8 2L11 0L10 10H1Z" fill="#9fa9cc" /></svg>;
  if (kind === "w") return <Wave />;
  return <svg width="12" height="11" className="shrink-0"><path d="M6 9.500H1V1H4L5 2.500H10.500V5M9 6V11M6.500 8.500H11.500" fill="none" stroke="currentColor" strokeWidth="1.100" /></svg>;
}

function Browser() {
  return (
    <aside className="flex w-[160px] shrink-0 flex-col bg-[#09051a]">
      <div className="flex h-[23px] items-center gap-[14px] bg-[#08030f] pt-[2px] pl-[2px] text-[#9b92a6]">
        <span className="flex h-[20px] w-[24px] items-center justify-center rounded-[3px] border border-[#b02fc0] bg-[#1c0526] text-[#e33ff0]"><Wave /></span>
        <svg width="11" height="12" className="-ml-[5px]"><path d="M0 0H6V2H2V10H0Z" fill="currentColor" /><path d="M3 3H8L11 6V12H3Z" fill="currentColor" /></svg>
        <VolumeX size={12} fill="currentColor" /><Settings size={12} /><Folder size={12} fill="currentColor" /><span className="text-[16px] font-bold text-[#c030d0]">+</span>
      </div>
      <div className="h-[517px] overflow-hidden border-l-[11px] border-[#1f0430] bg-[linear-gradient(90deg,#150424,#0a081f_30%)]">
        <div className="-mt-[4px] -ml-[11px]">
          {files.map(([t, lvl, kind], i) => (
            <div key={i} className={`flex h-[18.680px] items-center gap-[4px] ${indent[lvl]} ${i === 14 ? "ml-[14px] bg-[#6a2f4e]" : i === 15 ? "ml-[1px] bg-[#421328]" : ""} ${kind === "crown" ? "text-[#7b3e5c]" : kind === "sel" ? "text-white" : kind === "proj" ? "text-[#dba79f]" : "text-[#a9aec6]"}`}>
              <RowIcon kind={kind} />
              <span className="inline-block origin-left scale-x-[0.76] text-[12.500px] whitespace-nowrap">{t}</span>
            </div>
          ))}
        </div>
      </div>
      <div className="flex h-[75px] items-center bg-black pl-[10px]">
        <svg width="60" height="72">
          <path d="M1 28L6 22L10 24L13 18L16 9L18 20L21 12L24 16L27 4L30 14L33 3L36 12L40 6L42 14L46 7L49 18L54 12L60 20V43L54 44L49 52L46 44L42 56L40 46L36 64L33 50L30 56L27 46L24 54L21 44L16 48L12 38L6 36Z" fill="#f2f2f5" />
          <rect x="4" y="56" width="18" height="10" rx="2" fill="#c457e0" /><path d="M11 58V64L15 61Z" fill="#24082e" />
        </svg>
      </div>
      <div className="-mt-[3px] flex flex-1 items-center bg-[#08030f] pr-[3px] pl-[15px] text-[9.500px] font-semibold text-[#e4dcea]"><span className="inline-block origin-left">TAGS</span><Folder size={11} color="#5b5364" className="ml-auto" /><Search size={13} color="#d06be8" className="ml-[6px]" /></div>
    </aside>
  );
}

function Playlist() {
  return (
    <main className="flex flex-1 flex-col bg-[#2b0050]">
      <div className="flex h-[13px] items-center bg-[#381d48]">
        <div className="ml-[142px] flex h-full w-[82px] items-center justify-end gap-[9px] rounded-tl-lg bg-[#55405f] pr-[4px] text-[#a899b2]"><Wave /><Spline size={12} /><span className="text-white"><PianoGlyph /></span></div>
        <div className="ml-[17px] flex h-[9px] w-[359px] flex-col justify-between">
          <span className="h-[2px] bg-[#8d6fc0]" /><span className="h-[2px] bg-[#6f549f]" /><span className="h-[2px] bg-[#6f549f]" />
        </div>
        <span className="h-[11px] w-[174px] border-t border-r border-[#6e4f88] bg-[#3b1857]" />
        <span className="h-full flex-1 bg-[#261034]" /><span className="h-full w-[16px] bg-[#44285a]" />
      </div>
      <div className="flex flex-1 justify-end">
        <div className="flex w-[92px]">
          <div className="flex-1"><div className="flex h-[22px] items-center justify-end gap-[22px] bg-[#190628] pt-[2px] pr-[17px] text-[7px] text-[#8c7a98]"><span>23</span><span>24</span></div></div>
          <div className="w-[16px] bg-[#2a123e]"><div className="h-[46px] bg-[#442b59]" /></div>
        </div>
      </div>
      <div className="flex h-[20px] shrink-0">
        <div className="flex w-[136px] items-center justify-center border-t-4 border-[#270a38] bg-[#401857]"><svg width="7" height="7" className="-ml-[10px]"><path d="M3.500 0V7M0 3.500H7" stroke="#fff" strokeWidth="1.600" /></svg></div>
        <div className="w-[80px] overflow-hidden bg-[#53306b] pl-[2px] text-[8px] leading-[4px] text-[#8a6c9e]">TRACK 23</div>
        <div className="w-[12px] bg-[#1b0730]" />
      </div>
    </main>
  );
}

export default function App() {
  return (
    <div className="relative flex h-[720px] w-[1280px] justify-center overflow-hidden bg-black font-['Open_Sans','Noto_Sans',sans-serif]">
      <div className="mr-[2px] flex w-[1152px] flex-col">
        <div className="h-[66px] bg-[#5b4571]"><TopRow /><SecondRow /></div>
        <PlaylistBar />
        <div className="flex flex-1"><Browser /><Playlist /></div>
      </div>
      <VitalWindow />
      <svg width="10" height="15" viewBox="0 0 10 15" className="absolute top-[137px] left-[733px]">
        <path d="M1 1V11L3.500 9L5.500 13.500L7.500 12.500L5.500 8.500H9Z" fill="#111" stroke="#fff" />
      </svg>
      <div className="absolute top-[320px] left-[177px] font-['Inter',sans-serif] text-[66px] leading-[80px] font-semibold tracking-[1.400px] whitespace-nowrap text-white">
        Changing preset cuz its ahh
      </div>
    </div>
  );
}
